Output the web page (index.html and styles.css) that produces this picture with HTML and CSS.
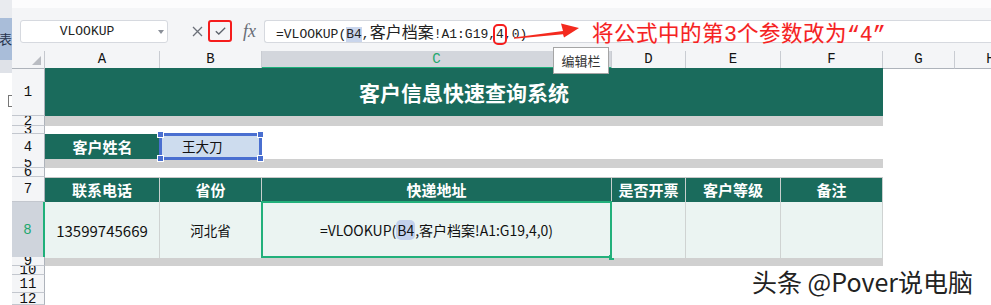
FILE: index.html
```html
<!DOCTYPE html>
<html lang="zh-CN">
<head>
  <meta charset="UTF-8">
  <title>客户信息快速查询系统</title>
  <link rel="stylesheet" href="styles.css">
</head>
<body>
  <div class="window">
    <!-- left edge of the neighbouring pane -->
    <div class="side">
      <div class="side-top"></div>
      <div class="side-tab">表</div>
      <div class="side-gap"></div>
      <div class="side-mark"></div>
    </div>

    <div class="main">
      <div class="topline"></div>

      <!-- formula bar -->
      <div class="toolbar">
        <div class="namebox">VLOOKUP<span class="caret"></span></div>
        <div class="tools">
          <svg class="cancel" width="11" height="11" viewBox="0 0 11 11">
            <path d="M1 1 L10 10 M10 1 L1 10" stroke="#6b7079" stroke-width="1.3" fill="none"/>
          </svg>
          <span class="ok">
            <svg width="11" height="8" viewBox="0 0 11 8">
              <path d="M0.8 4.2 L3.8 7 L10.2 0.8" stroke="#5d636c" stroke-width="1.3" fill="none"/>
            </svg>
          </span>
          <span class="fx">fx</span>
        </div>
        <div class="formula">
          =VLOOKUP(<span class="ref">B4</span>,<span class="cjk">客户档案</span>!A1:G19,<span class="arg">4</span>,0)
          <svg class="arrow" width="70" height="22" viewBox="0 0 70 22">
            <polygon points="2,16.6 51,10 49,2.5 67,7 52,16.5 51,13.2 2,17.8" fill="#f42a1e"/>
          </svg>
          <span class="note">将公式中的第3个参数改为“4”</span>
        </div>
      </div>

      <!-- sheet -->
      <div class="sheet">
        <div class="row colhead">
          <div class="corner"></div>
          <div class="ch">A</div>
          <div class="ch">B</div>
          <div class="ch on">C</div>
          <div class="ch">D</div>
          <div class="ch">E</div>
          <div class="ch">F</div>
          <div class="ch">G</div>
          <div class="ch">H</div>
        </div>

        <div class="row h48">
          <div class="rh">1</div>
          <div class="title span6">客户信息快速查询系统</div>
        </div>
        <div class="row h10">
          <div class="rh">2</div>
          <div class="band span6"></div>
        </div>
        <div class="row h8">
          <div class="rh">3</div>
        </div>
        <div class="row h25">
          <div class="rh">4</div>
          <div class="label">客户姓名</div>
          <div class="name">王大刀
            <span class="handle tl"></span><span class="handle tr"></span>
            <span class="handle bl"></span><span class="handle br"></span>
          </div>
        </div>
        <div class="row h9">
          <div class="rh">5</div>
          <div class="band span6"></div>
        </div>
        <div class="row h9">
          <div class="rh">6</div>
        </div>
        <div class="row h25">
          <div class="rh">7</div>
          <div class="th">联系电话</div>
          <div class="th">省份</div>
          <div class="th">快递地址</div>
          <div class="th">是否开票</div>
          <div class="th">客户等级</div>
          <div class="th">备注</div>
        </div>
        <div class="row h55">
          <div class="rh active">8</div>
          <div class="td num">13599745669</div>
          <div class="td">河北省</div>
          <div class="td sel">=VLOOKUP(<span class="ref2">B4</span>,客户档案!A1:G19,4,0)<span class="fill"></span></div>
          <div class="td"></div>
          <div class="td"></div>
          <div class="td"></div>
        </div>
        <div class="row h9">
          <div class="rh">9</div>
          <div class="band span6"></div>
        </div>
        <div class="row h9">
          <div class="rh">10</div>
        </div>
        <div class="row h18">
          <div class="rh">11</div>
        </div>
        <div class="row h12">
          <div class="rh">12</div>
        </div>
      </div>

      <div class="tip">编辑栏</div>
    </div>

    <div class="watermark">头条 @Pover说电脑</div>
  </div>
</body>
</html>
```

FILE: styles.css
```css
* {
  box-sizing: border-box;
}

body {
  margin: 0;
  background: #fff;
  font-family: "Noto Sans CJK SC", sans-serif;
  overflow: hidden;
}

.window {
  position: relative;
  display: flex;
  width: 991px;
  height: 305px;
  overflow: hidden;
}

/* neighbouring pane edge */
.side {
  width: 12px;
  flex: none;
  display: flex;
  flex-direction: column;
  overflow: hidden;
}

.side-top {
  height: 18px;
  background: #e9ebef;
}

.side-tab {
  height: 42px;
  background: #a9bdd9;
  color: #26344d;
  font-size: 13px;
  line-height: 42px;
  text-indent: -1px;
}

.side-gap {
  height: 13px;
  background: #dfe2e8;
}

.side-mark {
  width: 4px;
  height: 12px;
  margin: 22px 0 0 8px;
  border: 1px solid #777;
  border-right: none;
}

.main {
  position: relative;
  flex: 1;
  min-width: 0;
  display: flex;
  flex-direction: column;
  overflow: hidden;
}

.topline {
  height: 8px;
  background: #fcfcfd;
}

/* formula bar */
.toolbar {
  height: 44px;
  background: #f4f5f7;
  display: flex;
  align-items: flex-start;
  padding: 12px 0 0 8px;
}

.namebox {
  position: relative;
  width: 148px;
  height: 23px;
  background: #fff;
  border: 1px solid #d6d9df;
  border-radius: 3px;
  font-family: "Liberation Mono", monospace;
  font-size: 13px;
  line-height: 21px;
  color: #222;
  text-align: center;
  padding-right: 14px;
}

.caret {
  position: absolute;
  right: 3px;
  top: 9px;
  border: 3px solid transparent;
  border-top: 4px solid #8a8f98;
}

.tools {
  display: flex;
  align-items: center;
  height: 23px;
  padding-left: 24px;
}

.ok {
  display: flex;
  align-items: center;
  justify-content: center;
  width: 24px;
  height: 22px;
  margin-left: 5px;
  border: 2px solid #f51d1d;
  border-radius: 3px;
}

.fx {
  margin: 0 8px 0 11px;
  font-family: "Liberation Serif", serif;
  font-style: italic;
  font-size: 18px;
  color: #676c75;
  line-height: 20px;
}

.formula {
  position: relative;
  flex: 1;
  height: 23px;
  background: #fff;
  border: 1px solid #d6d9df;
  border-right: none;
  border-radius: 3px 0 0 3px;
  padding-left: 11px;
  font-family: "Liberation Mono", monospace;
  font-size: 13px;
  line-height: 21px;
  color: #222;
  white-space: nowrap;
}

.formula .cjk {
  font-family: "Noto Sans CJK SC", sans-serif;
  font-size: 16px;
}

.ref {
  background: #c9d5ec;
}

.arg {
  border-radius: 2px;
  outline: 2px solid #f51d1d;
  outline-offset: 1px;
}

.arrow {
  position: absolute;
  left: 247px;
  top: 0;
}

.note {
  position: absolute;
  left: 327px;
  top: 3px;
  font-size: 21.5px;
  line-height: 22px;
  color: #f52222;
  text-shadow: 0 0 1px #ffd0d8;
}

/* sheet */
.sheet {
  flex: 1;
  display: flex;
  flex-direction: column;
}

.row {
  display: grid;
  grid-template-columns: 33px 115px 102px 350px 74px 95px 102px 72px 72px;
  flex: none;
}

.colhead { height: 17px; }
.h48 { height: 48px; }
.h10 { height: 10px; }
.h8 { height: 8px; }
.h25 { height: 25px; }
.h9 { height: 9px; }
.h55 { height: 55px; }
.h18 { height: 18px; }
.h12 { height: 12px; }

.span6 {
  grid-column: span 6;
}

.corner {
  position: relative;
  background: #f4f5f7;
  border-right: 1px solid #c5c8ce;
  border-bottom: 1px solid #aeb3bb;
}

.corner::after {
  content: "";
  position: absolute;
  right: 3px;
  bottom: 3px;
  border-style: solid;
  border-width: 0 0 9px 9px;
  border-color: transparent transparent #b9bcc2 transparent;
}

.ch {
  background: #f4f5f7;
  border-right: 1px solid #c9ccd2;
  border-bottom: 1px solid #aeb3bb;
  font-family: "Liberation Mono", monospace;
  font-size: 14px;
  line-height: 16px;
  text-align: center;
  color: #111;
}

.ch.on {
  background: #d3d6dc;
  color: #1fa86f;
  border-bottom: 2px solid #1fb07a;
}

.rh {
  display: flex;
  align-items: center;
  justify-content: center;
  overflow: hidden;
  background: #f4f5f7;
  border-right: 1px solid #aeb3bb;
  border-bottom: 1px solid #c3c7ce;
  font-family: "Liberation Mono", monospace;
  font-size: 14px;
  color: #111;
}

.rh.active {
  background: #cfd4dc;
  color: #1fa86f;
  border-right: 2px solid #1fb07a;
}

.title {
  background: #1a6b5c;
  color: #fff;
  font-size: 21px;
  font-weight: 700;
  text-align: center;
  line-height: 48px;
}

.band {
  background: #d0d0d0;
}

.label {
  background: #1a6b5c;
  color: #fff;
  font-size: 15px;
  font-weight: 700;
  text-align: center;
  line-height: 25px;
}

.name {
  position: relative;
  background: #cddcee;
  border: 3px solid #4a6fd0;
  margin: -1px 0 0 -1px;
  height: 27px;
  padding-left: 20px;
  font-size: 13.5px;
  line-height: 20px;
  color: #111;
}

.handle {
  position: absolute;
  width: 7px;
  height: 7px;
  background: #4a6fd0;
  border: 1px solid #fff;
}

.handle.tl { left: -5px; top: -5px; }
.handle.tr { right: -5px; top: -5px; }
.handle.bl { left: -5px; bottom: -5px; }
.handle.br { right: -5px; bottom: -5px; }

.th {
  background: #1a6b5c;
  color: #fff;
  border-top: 1px solid #c8c8c8;
  border-right: 1px solid #c8cfcd;
  font-size: 15px;
  font-weight: 700;
  text-align: center;
  line-height: 23px;
}

.td {
  position: relative;
  background: #ebf4f2;
  border-right: 1px solid #cfd3d2;
  display: flex;
  align-items: center;
  justify-content: center;
  font-size: 13.5px;
  color: #111;
}

.td.num {
  font-size: 15px;
}

.td.sel {
  border: 2px solid #22b07b;
  margin: -1px 0 0 -1px;
  height: 57px;
  font-size: 14px;
}

.ref2 {
  background: #c3d1ec;
  border-radius: 5px;
  padding: 0 1px;
}

.fill {
  position: absolute;
  right: -4px;
  bottom: -4px;
  width: 5px;
  height: 5px;
  background: #22b07b;
}

.tip {
  position: absolute;
  left: 541px;
  top: 47px;
  width: 56px;
  height: 27px;
  background: #fff;
  border: 1px solid #a5a5a5;
  font-size: 13px;
  line-height: 25px;
  text-align: center;
  color: #333;
}

.watermark {
  position: absolute;
  left: 752px;
  top: 266px;
  font-size: 25px;
  line-height: 30px;
  color: #222;
  text-shadow: 0 0 2px #fff, 0 0 2px #fff;
}
```
